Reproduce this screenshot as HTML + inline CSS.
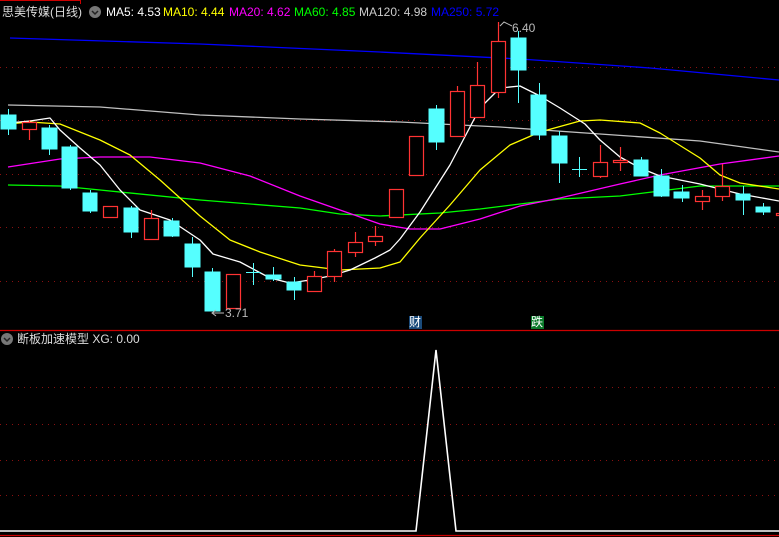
<!DOCTYPE html>
<html><head><meta charset="utf-8"><style>
html,body{margin:0;padding:0;background:#000;}
body{width:779px;height:537px;overflow:hidden;position:relative;font-family:"Liberation Sans","Noto Sans CJK SC",sans-serif;}
.t{position:absolute;font-size:12px;white-space:pre;line-height:14px;}
</style></head><body>
<svg width="779" height="537" style="position:absolute;left:0;top:0" xmlns="http://www.w3.org/2000/svg">
<line x1="0" y1="0.5" x2="81" y2="0.5" stroke="#c00" stroke-width="1"/>
<line x1="80.5" y1="0" x2="80.5" y2="4" stroke="#c00"/>
<g stroke="#8a1010" stroke-dasharray="1,5" stroke-width="1">
<line x1="0" y1="67.5" x2="779" y2="67.5"/><line x1="0" y1="120.5" x2="779" y2="120.5"/>
<line x1="0" y1="174.5" x2="779" y2="174.5"/><line x1="0" y1="227.5" x2="779" y2="227.5"/>
<line x1="0" y1="281.5" x2="779" y2="281.5"/>
<line x1="0" y1="387.5" x2="779" y2="387.5"/><line x1="0" y1="424.5" x2="779" y2="424.5"/>
<line x1="0" y1="460.5" x2="779" y2="460.5"/><line x1="0" y1="495.5" x2="779" y2="495.5"/>
</g>
<line x1="0" y1="330.5" x2="779" y2="330.5" stroke="#c00" stroke-width="1.2"/>
<line x1="0" y1="535.5" x2="779" y2="535.5" stroke="#c00" stroke-width="1.2"/>
<g fill="none" stroke-width="1.3" stroke-linejoin="round">
<polyline stroke="#0000ff" points="10,38 200,44 380,52 520,59 650,68 779,80"/>
<polyline stroke="#c0c0c0" points="8,105 100,107 200,115 300,119 400,122 500,127 600,134 700,141 779,152"/>
<polyline stroke="#00ff00" points="8,185 60,186 100,190 200,200 300,208 340,214 380,216 440,213 480,209 560,199 620,196 700,186 779,186"/>
<polyline stroke="#ff00ff" points="8,167 60,159 100,157 150,157 200,163 250,176 300,196 340,210 380,224 410,229 440,229 480,219 520,206 560,198 620,184 660,175 720,164 779,156"/>
<polyline stroke="#ffff00" points="8,124 30,122 60,124 100,140 130,155 160,180 200,216 230,240 260,252 300,265 340,270 380,268 400,262 420,238 450,205 480,170 510,145 540,132 580,121 600,120 640,123 660,133 700,158 720,175 740,183 779,189"/>
<polyline stroke="#ffffff" points="8,123 30,121 50,118 60,130 80,148 100,165 120,190 140,210 170,220 200,240 213,254 240,262 270,278 290,283 310,280 330,276 350,270 375,258 390,250 400,239 420,212 450,165 480,108 500,88 520,86 540,96 560,108 585,124 600,140 620,157 640,168 660,176 700,184 740,194 779,201"/>
</g>
<g stroke="#55ffff" fill="#55ffff">
<line x1="8.5" y1="109" x2="8.5" y2="135"/><rect x="1" y="115" width="15" height="14"/>
<line x1="49.5" y1="125" x2="49.5" y2="155"/><rect x="42" y="128" width="15" height="21"/>
<line x1="70.5" y1="145" x2="70.5" y2="190"/><rect x="62" y="147" width="15" height="41"/>
<line x1="90.5" y1="190" x2="90.5" y2="213"/><rect x="83" y="193" width="14" height="18"/>
<line x1="131.5" y1="206" x2="131.5" y2="238"/><rect x="124" y="208" width="14" height="24"/>
<line x1="172.5" y1="218" x2="172.5" y2="237"/><rect x="164" y="221" width="15" height="15"/>
<line x1="192.5" y1="237" x2="192.5" y2="277"/><rect x="185" y="244" width="15" height="23"/>
<line x1="212.5" y1="268" x2="212.5" y2="311"/><rect x="205" y="272" width="15" height="39"/>
<line x1="253.5" y1="263" x2="253.5" y2="285"/><line x1="246" y1="272.5" x2="261" y2="272.5"/>
<line x1="273.5" y1="267" x2="273.5" y2="281"/><rect x="266" y="275" width="15" height="4"/>
<line x1="294.5" y1="277" x2="294.5" y2="300"/><rect x="287" y="282" width="14" height="8"/>
<line x1="436.5" y1="105" x2="436.5" y2="150"/><rect x="429" y="109" width="15" height="33"/>
<line x1="518.5" y1="31" x2="518.5" y2="103"/><rect x="511" y="38" width="15" height="32"/>
<line x1="539.5" y1="83" x2="539.5" y2="140"/><rect x="531" y="95" width="15" height="40"/>
<line x1="559.5" y1="131" x2="559.5" y2="183"/><rect x="552" y="136" width="15" height="27"/>
<line x1="579.5" y1="157" x2="579.5" y2="177"/><line x1="572" y1="169.5" x2="587" y2="169.5"/>
<line x1="641.5" y1="157" x2="641.5" y2="176"/><rect x="634" y="160" width="14" height="16"/>
<line x1="661.5" y1="169" x2="661.5" y2="197"/><rect x="654" y="176" width="15" height="20"/>
<line x1="682.5" y1="185" x2="682.5" y2="202"/><rect x="674" y="192" width="15" height="6"/>
<line x1="743.5" y1="186" x2="743.5" y2="215"/><rect x="736" y="194" width="14" height="6"/>
<line x1="763.5" y1="203" x2="763.5" y2="215"/><rect x="756" y="207" width="14" height="5"/>
</g>
<g stroke="#ff3333" fill="#000" stroke-width="1.2">
<line x1="29.5" y1="120" x2="29.5" y2="140"/><rect x="22.5" y="122.5" width="14" height="7"/>
<rect x="103.5" y="206.5" width="14" height="11"/>
<line x1="151.5" y1="210" x2="151.5" y2="240"/><rect x="144.5" y="218.5" width="14" height="21"/>
<rect x="226.5" y="274.5" width="14" height="34"/>
<line x1="314.5" y1="271" x2="314.5" y2="292"/><rect x="307.5" y="276.5" width="14" height="15"/>
<line x1="334.5" y1="249" x2="334.5" y2="282"/><rect x="327.5" y="251.5" width="14" height="25"/>
<line x1="355.5" y1="232" x2="355.5" y2="257"/><rect x="348.5" y="242.5" width="14" height="10"/>
<line x1="375.5" y1="226" x2="375.5" y2="246"/><rect x="368.5" y="236.5" width="14" height="5"/>
<rect x="389.5" y="189.5" width="14" height="28"/>
<rect x="409.5" y="136.5" width="14" height="39"/>
<line x1="457.5" y1="86" x2="457.5" y2="91"/><rect x="450.5" y="91.5" width="14" height="45"/>
<line x1="477.5" y1="62" x2="477.5" y2="85"/><rect x="470.5" y="85.5" width="14" height="32"/>
<line x1="498.5" y1="22" x2="498.5" y2="98"/><rect x="491.5" y="41.5" width="14" height="51"/>
<line x1="600.5" y1="145" x2="600.5" y2="178"/><rect x="593.5" y="162.5" width="14" height="14"/>
<line x1="620.5" y1="147" x2="620.5" y2="171"/><rect x="613.5" y="160.5" width="14" height="2"/>
<line x1="702.5" y1="190" x2="702.5" y2="210"/><rect x="695.5" y="196.5" width="14" height="5"/>
<line x1="722.5" y1="164" x2="722.5" y2="201"/><rect x="715.5" y="186.5" width="14" height="10"/>
<rect x="776.5" y="213.5" width="8" height="2"/>
</g>
<g stroke="#bbb" fill="none"><path d="M500,26 L504,22 L512,26"/><path d="M224,313 L212,313 M216,310 L212,313 L216,316"/></g>
<rect x="409" y="316" width="13" height="13" fill="#1a4a7a"/>
<rect x="531" y="316" width="13" height="13" fill="#0a7a2a"/>
<polyline fill="none" stroke="#fff" stroke-width="1.6" points="0,531 416,531 436,350 456,531 779,531"/>
<circle cx="95" cy="12" r="6" fill="#777"/><path d="M92,11 L95,14 L98,11" stroke="#222" stroke-width="1.5" fill="none"/>
<circle cx="7" cy="339" r="6" fill="#777"/><path d="M4,338 L7,341 L10,338" stroke="#222" stroke-width="1.5" fill="none"/>
</svg>
<div class="t" style="left:2px;top:5px;color:#ddd;">思美传媒(日线)</div>
<div class="t" style="left:106px;top:5px;color:#fff;">MA5: 4.53</div>
<div class="t" style="left:163px;top:5px;color:#ff0;">MA10: 4.44</div>
<div class="t" style="left:229px;top:5px;color:#f0f;">MA20: 4.62</div>
<div class="t" style="left:294px;top:5px;color:#0f0;">MA60: 4.85</div>
<div class="t" style="left:359px;top:5px;color:#ccc;">MA120: 4.98</div>
<div class="t" style="left:431px;top:5px;color:#00f;">MA250: 5.72</div>
<div class="t" style="left:512px;top:21px;color:#bbb;">6.40</div>
<div class="t" style="left:225px;top:306px;color:#bbb;">3.71</div>
<div class="t" style="left:409px;top:315px;color:#fff;">财</div>
<div class="t" style="left:531px;top:315px;color:#fff;">跌</div>
<div class="t" style="left:17px;top:332px;color:#ddd;">断板加速模型 XG: 0.00</div>
</body></html>
